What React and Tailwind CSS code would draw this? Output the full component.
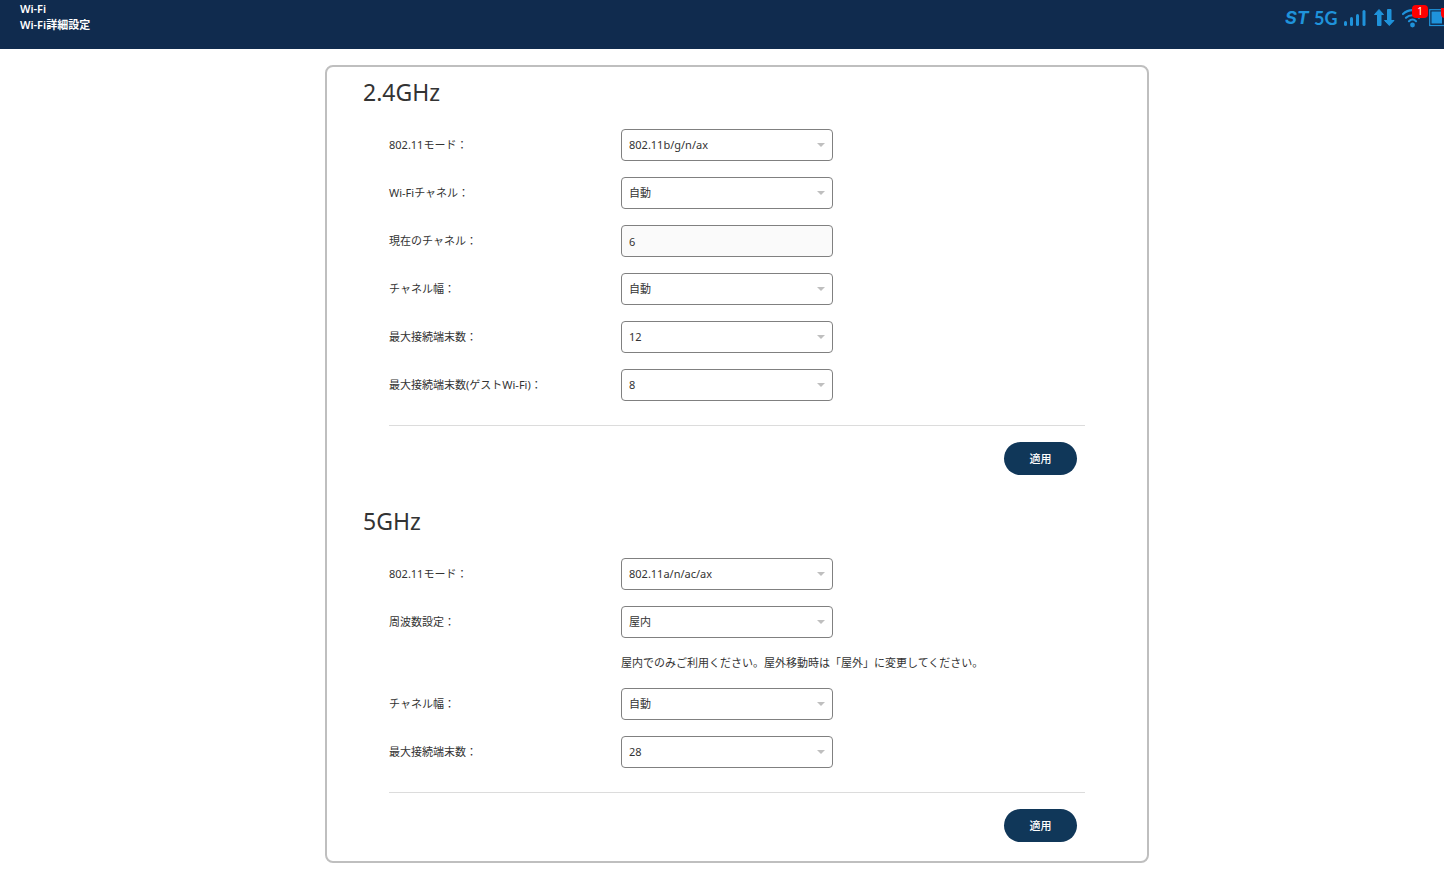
import React, { useState } from "react";

const bands = [
  {
    title: "2.4GHz",
    fields: [
      { id: "mode24", label: "802.11モード：", options: ["802.11b/g/n/ax", "802.11b/g/n", "802.11b/g"] },
      { id: "channel24", label: "Wi-Fiチャネル：", options: ["自動", "1", "6", "11"] },
      { id: "current24", label: "現在のチャネル：", value: "6" },
      { id: "width24", label: "チャネル幅：", options: ["自動", "20MHz"] },
      { id: "max24", label: "最大接続端末数：", options: ["12", "8", "4"] },
      { id: "guest24", label: "最大接続端末数(ゲストWi-Fi)：", options: ["8", "4"] },
    ],
  },
  {
    title: "5GHz",
    fields: [
      { id: "mode5", label: "802.11モード：", options: ["802.11a/n/ac/ax", "802.11a/n/ac"] },
      {
        id: "area5",
        label: "周波数設定：",
        options: ["屋内", "屋外"],
        note: "屋内でのみご利用ください。屋外移動時は「屋外」に変更してください。",
      },
      { id: "width5", label: "チャネル幅：", options: ["自動", "20MHz"] },
      { id: "max5", label: "最大接続端末数：", options: ["28", "16", "8"] },
    ],
  },
];

function SelectField({ id, options }) {
  const [value, setValue] = useState(options[0]);

  return (
    <div className="relative w-[212px]">
      <select
        id={id}
        value={value}
        onChange={(e) => setValue(e.target.value)}
        className="block h-8 w-full appearance-none rounded-[4px] border border-[#808080] bg-white pl-[7px] pr-6"
      >
        {options.map((option) => (
          <option key={option}>{option}</option>
        ))}
      </select>
      <svg className="pointer-events-none absolute right-2 top-3.5 h-1 w-2" viewBox="0 0 8 4" fill="#bfbfbf">
        <path d="M0 0h8L4 4z" />
      </svg>
    </div>
  );
}

function Field({ field }) {
  return (
    <>
      <div className="flex items-center">
        <label htmlFor={field.id} className="w-[232px] shrink-0">{field.label}</label>
        {field.options ? (
          <SelectField id={field.id} options={field.options} />
        ) : (
          <input
            id={field.id}
            value={field.value}
            readOnly
            className="h-8 w-[212px] rounded-[4px] border border-[#808080] bg-[#fafafa] px-[7px]"
          />
        )}
      </div>
      {field.note && <p className="pl-[232px] leading-[18px]">{field.note}</p>}
    </>
  );
}

function Band({ band }) {
  return (
    <section>
      <h2 className="text-[23px] leading-[34px]">{band.title}</h2>
      <form className="px-[26px] pt-5" onSubmit={(e) => e.preventDefault()}>
        <div className="flex flex-col gap-4 border-b border-[#dcdcdc] pb-6">
          {band.fields.map((field) => (
            <Field key={field.id} field={field} />
          ))}
        </div>
        <div className="flex justify-end pr-2 pt-4">
          <button type="submit" className="h-[33px] w-[73px] rounded-full bg-[#103759] pt-px font-medium text-white">
            適用
          </button>
        </div>
      </form>
    </section>
  );
}

function StatusIcons() {
  return (
    <div className="flex shrink-0 pt-1 text-lg text-[#1f93db]">
      <span className="w-[29px] font-[Inter] font-bold italic">ST</span>
      <span className="w-[30px] font-[Lato] font-bold">5G</span>
      {/* Signal */}
      <svg className="mt-1 h-5 w-[30px]" viewBox="0 0 30 20" fill="currentColor">
        <rect x="0" y="13" width="3" height="5" rx="1.500" />
        <rect x="6" y="9" width="3" height="9" rx="1.500" />
        <rect x="12" y="6" width="3" height="12" rx="1.500" />
        <rect x="18.500" y="2" width="3" height="16" rx="1.500" />
      </svg>
      {/* Data transfer */}
      <svg className="mt-1 h-5 w-7" viewBox="0 0 28 20" fill="currentColor" stroke="currentColor" strokeLinejoin="round">
        <path d="M5 1.500L9.500 6.500H7V17.500H3.500V6.500H0.500z" />
        <path d="M13.500 1.500H17V12.500h3L15.300 17.500 10.500 12.500h3z" />
      </svg>
      {/* Wi-Fi */}
      <div className="relative mr-1 mt-1 h-5 w-[23px]">
        <svg
          className="h-5 w-[23px]"
          viewBox="0 0 23 20"
          fill="none"
          stroke="currentColor"
          strokeWidth="2.200"
          strokeLinecap="round"
        >
          <path d="M1 6C6.500 0.800 14.500 0.800 20 6" />
          <path d="M4 9.800c3.500-3.400 9.500-3.400 13 0" />
          <path d="M7 13.200c2-2 5-2 7 0" />
          <circle cx="10.500" cy="17" r="2.400" fill="currentColor" stroke="none" />
        </svg>
        <span className="absolute -top-[3px] left-2.5 h-[13px] w-4 rounded-[4px] bg-[#ff0000] text-center font-[Noto_Sans] text-[10px] leading-[13px] text-white">
          1
        </span>
      </div>
      {/* Battery */}
      <div className="relative mt-1 h-5 w-[15px] overflow-hidden">
        <svg className="h-5 w-8" viewBox="0 0 32 20">
          <rect x="0.700" y="1.700" width="28" height="15.800" fill="none" stroke="currentColor" strokeWidth="1.200" />
          <rect x="2.500" y="3.500" width="10.500" height="12" fill="currentColor" />
        </svg>
        <span className="absolute -top-[3px] left-3 h-[13px] w-4 rounded-[4px] bg-[#ff0000]"></span>
      </div>
    </div>
  );
}

function App() {
  return (
    <div lang="ja" className="min-h-screen bg-white font-['Noto_Sans','Noto_Sans_CJK_JP',sans-serif] text-[11px] text-[#333]">
      <header className="flex h-[49px] justify-between overflow-hidden bg-[#102b4e] pl-5 text-white">
        <div className="pt-px font-semibold leading-4">
          <p>Wi-Fi</p>
          <h1>Wi-Fi詳細設定</h1>
        </div>
        <StatusIcons />
      </header>
      <main className="pb-3 pl-[30px] pt-4">
        <div className="mx-auto flex max-w-[824px] flex-col gap-[29px] rounded-lg border-2 border-[#bfbfbf] px-9 pb-[19px] pt-2">
          {bands.map((band) => (
            <Band key={band.title} band={band} />
          ))}
        </div>
      </main>
    </div>
  );
}

export default App;
